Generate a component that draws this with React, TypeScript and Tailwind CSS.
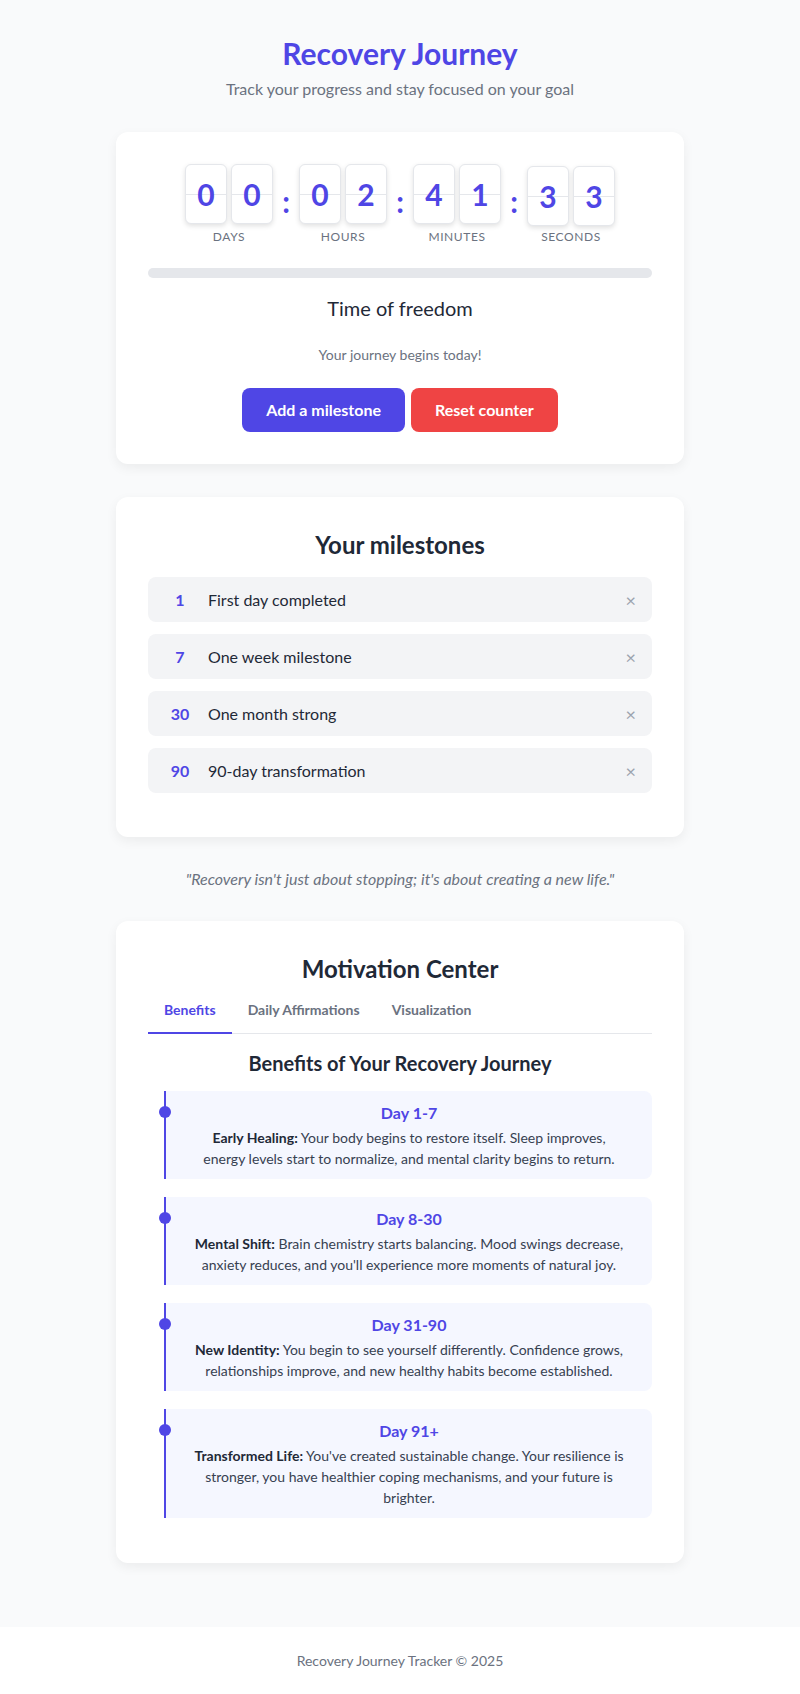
import React from "react";

const font = { fontFamily: '"Segoe UI", Lato, "Noto Sans", sans-serif' };

interface DigitGroupProps {
  value: string;
  label: string;
  shift?: boolean;
}

function DigitGroup({ value, label, shift }: DigitGroupProps) {
  return (
    <div className="flex flex-col items-center">
      <div className={shift ? "flex gap-1 translate-y-[2px]" : "flex gap-1"}>
        {value.split("").map((d, i) => (
          <div
            key={i}
            className="relative w-[42px] h-[60px] rounded-md bg-white border border-[#e5e7eb] shadow-[0_2px_5px_rgba(0,0,0,0.12)] flex items-center justify-center"
          >
            <div className="absolute left-0 right-0 top-1/2 h-px bg-[#e5e7eb]" />
            <span className="relative text-[30px] font-bold text-[#4f46e5] leading-none">{d}</span>
          </div>
        ))}
      </div>
      <span className="mt-[5px] text-xs leading-4 uppercase tracking-wider text-[#6b7280]">{label}</span>
    </div>
  );
}

function Colon() {
  return (
    <div className="w-[26px] flex justify-center">
      <span className="text-[30px] font-bold text-[#4f46e5] leading-none -mt-[8px]">:</span>
    </div>
  );
}

const milestones = [
  { days: 1, text: "First day completed" },
  { days: 7, text: "One week milestone" },
  { days: 30, text: "One month strong" },
  { days: 90, text: "90-day transformation" },
];

const benefits = [
  {
    title: "Day 1-7",
    label: "Early Healing:",
    text: "Your body begins to restore itself. Sleep improves, energy levels start to normalize, and mental clarity begins to return.",
  },
  {
    title: "Day 8-30",
    label: "Mental Shift:",
    text: "Brain chemistry starts balancing. Mood swings decrease, anxiety reduces, and you'll experience more moments of natural joy.",
  },
  {
    title: "Day 31-90",
    label: "New Identity:",
    text: "You begin to see yourself differently. Confidence grows, relationships improve, and new healthy habits become established.",
  },
  {
    title: "Day 91+",
    label: "Transformed Life:",
    text: "You've created sustainable change. Your resilience is stronger, you have healthier coping mechanisms, and your future is brighter.",
  },
];

export default function App() {
  return (
    <div className="min-h-screen bg-[#f9fafb] flex flex-col" style={font}>
      <main className="w-[568px] mx-auto pt-[35px] pb-16">
        {/* header */}
        <div className="text-center mb-[31px]">
          <h1 className="text-[30px] leading-9 font-bold text-[#4f46e5] mb-[6px]">Recovery Journey</h1>
          <p className="text-base leading-6 text-[#6b7280]">Track your progress and stay focused on your goal</p>
        </div>

        {/* counter */}
        <section className="bg-white rounded-xl shadow-[0_4px_12px_rgba(0,0,0,0.06)] p-8 mb-[33px]">
          <div className="flex justify-center items-center">
            <DigitGroup value="00" label="Days" />
            <Colon />
            <DigitGroup value="02" label="Hours" />
            <Colon />
            <DigitGroup value="41" label="Minutes" />
            <Colon />
            <DigitGroup value="33" label="Seconds" shift />
          </div>
          <div className="mt-[23px] h-2.5 rounded-full bg-[#e5e7eb]" />
          <p className="mt-4 text-xl leading-7 text-[#1f2937] text-center">Time of freedom</p>
          <p className="mt-[23px] text-sm leading-5 text-[#6b7280] text-center">Your journey begins today!</p>
          <div className="mt-[23px] flex justify-center gap-[6px]">
            <button className="h-11 px-6 rounded-lg bg-[#4f46e5] text-white font-bold text-base">
              Add a milestone
            </button>
            <button className="h-11 px-6 rounded-lg bg-[#ef4444] text-white font-bold text-base">
              Reset counter
            </button>
          </div>
        </section>

        {/* milestones */}
        <section className="bg-white rounded-xl shadow-[0_4px_12px_rgba(0,0,0,0.06)] p-8">
          <h2 className="text-2xl leading-8 font-bold text-[#1f2937] text-center mb-4">Your milestones</h2>
          {milestones.map((m) => (
            <div key={m.days} className="h-[45px] mb-3 flex items-center rounded-lg bg-[#f3f4f6] pl-3 pr-4">
              <span className="w-10 text-center font-bold text-[#4f46e5]">{m.days}</span>
              <span className="ml-2 flex-1 text-[#1f2937]">{m.text}</span>
              <span className="text-lg leading-none text-[#9ca3af]">×</span>
            </div>
          ))}
        </section>

        <p className="mt-[30px] mb-[30px] text-center italic text-[#6b7280] leading-6">
          "Recovery isn't just about stopping; it's about creating a new life."
        </p>

        {/* motivation */}
        <section className="bg-white rounded-xl shadow-[0_4px_12px_rgba(0,0,0,0.06)] px-8 pt-8 pb-[27px]">
          <h2 className="text-2xl leading-8 font-bold text-[#1f2937] text-center mb-[7px]">Motivation Center</h2>
          <div className="flex border-b border-[#e5e7eb]">
            <button className="-mb-px px-4 pt-2 pb-3 text-sm leading-5 font-bold text-[#4f46e5] border-b-2 border-[#4f46e5]">
              Benefits
            </button>
            <button className="-mb-px px-4 pt-2 pb-3 text-sm leading-5 font-bold text-[#6b7280] border-b-2 border-transparent">
              Daily Affirmations
            </button>
            <button className="-mb-px px-4 pt-2 pb-3 text-sm leading-5 font-bold text-[#6b7280] border-b-2 border-transparent">
              Visualization
            </button>
          </div>
          <h3 className="mt-[15px] mb-[14px] text-xl leading-7 font-bold text-[#1f2937] text-center">
            Benefits of Your Recovery Journey
          </h3>
          <div className="ml-4">
            {benefits.map((b) => (
              <div
                key={b.title}
                className="relative mb-[18px] border-l-2 border-[#4f46e5] bg-[#f5f7ff] rounded-r-lg px-6 py-2.5 text-center"
              >
                <div className="absolute -left-[7px] top-[15px] w-3 h-3 rounded-full bg-[#4f46e5]" />
                <h4 className="text-base leading-6 font-bold text-[#4f46e5] mb-0.5">{b.title}</h4>
                <p className="text-sm leading-[21px] text-[#374151]">
                  <strong className="font-bold text-[#1f2937]">{b.label}</strong> {b.text}
                </p>
              </div>
            ))}
          </div>
        </section>
      </main>

      <footer className="bg-white py-6 text-center text-sm leading-5 text-[#6b7280]">
        Recovery Journey Tracker © 2025
      </footer>
    </div>
  );
}
